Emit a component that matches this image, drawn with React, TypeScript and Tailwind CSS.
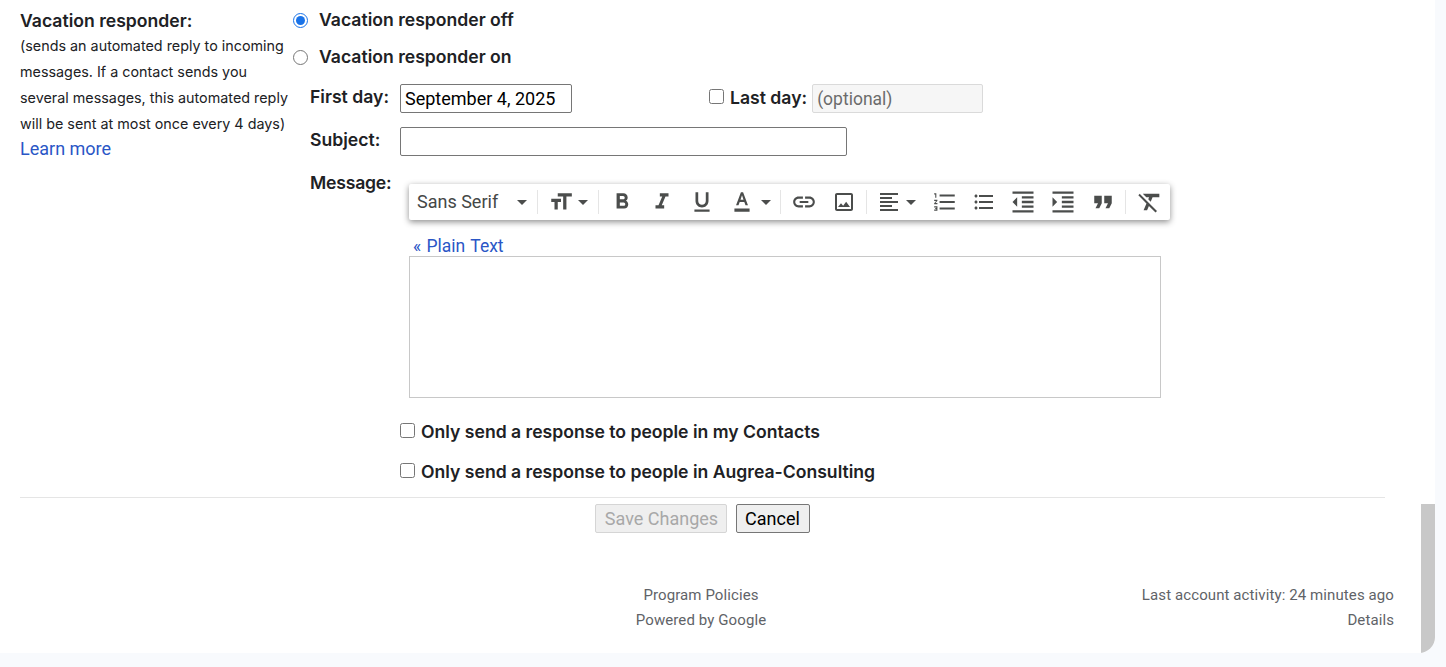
const P = {
  bold: "M15.6 10.79c.97-.67 1.65-1.77 1.65-2.79 0-2.26-1.75-4-4-4H7v14h7.04c2.09 0 3.71-1.7 3.71-3.79 0-1.52-.86-2.82-2.15-3.42zM10 6.5h3c.83 0 1.5.67 1.5 1.5s-.67 1.5-1.5 1.5h-3v-3zm3.5 9H10v-3h3.5c.83 0 1.5.67 1.5 1.5s-.67 1.5-1.5 1.5z",
  italic: "M10 4v3h2.21l-3.42 8H6v3h8v-3h-2.21l3.42-8H18V4z",
  underline: "M12 17c3.31 0 6-2.69 6-6V3h-2.5v8c0 1.93-1.57 3.5-3.5 3.5S8.5 12.93 8.5 11V3H6v8c0 3.31 2.69 6 6 6zm-7 2v2h14v-2H5z",
  color: "M11 3L6.5 15h2.25l1.12-3h4.25l1.12 3h2.25L13 3h-2zm-.38 7L12 5.67 13.38 10h-2.76zM5 18h14v3H5z",
  link: "M3.9 12c0-1.71 1.39-3.1 3.1-3.1h4V7H7c-2.76 0-5 2.24-5 5s2.24 5 5 5h4v-1.9H7c-1.71 0-3.1-1.39-3.1-3.1zM8 13h8v-2H8v2zm9-6h-4v1.9h4c1.71 0 3.1 1.39 3.1 3.1s-1.39 3.1-3.1 3.1h-4V17h4c2.76 0 5-2.24 5-5s-2.24-5-5-5z",
  image: "M19 5v14H5V5h14m0-2H5c-1.1 0-2 .9-2 2v14c0 1.1.9 2 2 2h14c1.1 0 2-.9 2-2V5c0-1.1-.9-2-2-2zm-4.86 8.86l-3 3.87L9 13.14 6 17h12l-3.86-5.14z",
  align: "M15 15H3v2h12v-2zm0-8H3v2h12V7zM3 13h18v-2H3v2zm0 8h18v-2H3v2zM3 3v2h18V3H3z",
  numbered: "M2 17h2v.5H3v1h1v.5H2v1h3v-4H2v1zm1-9h1V4H2v1h1v3zm-1 3h1.8L2 13.1v.9h3v-1H3.2L5 10.9V10H2v1zm5-6v2h14V5H7zm0 14h14v-2H7v2zm0-6h14v-2H7v2z",
  bullet: "M4 10.5c-.83 0-1.5.67-1.5 1.5s.67 1.5 1.5 1.5 1.5-.67 1.5-1.5-.67-1.5-1.5-1.5zm0-6c-.83 0-1.5.67-1.5 1.5S3.17 7.5 4 7.5 5.5 6.83 5.5 6 4.83 4.5 4 4.5zm0 12c-.83 0-1.5.68-1.5 1.5s.68 1.5 1.5 1.5 1.5-.68 1.5-1.5-.67-1.5-1.5-1.5zM7 19h14v-2H7v2zm0-6h14v-2H7v2zm0-8v2h14V5H7z",
  outdent: "M11 17h10v-2H11v2zm-8-5l4 4V8l-4 4zm0 9h18v-2H3v2zM3 3v2h18V3H3zm8 6h10V7H11v2zm0 4h10v-2H11v2z",
  indent: "M3 21h18v-2H3v2zM3 8v8l4-4-4-4zm8 9h10v-2H11v2zM3 3v2h18V3H3zm8 6h10V7H11v2zm0 4h10v-2H11v2z",
  quote: "M6 17h3l2-4V7H5v6h3zm8 0h3l2-4V7h-6v6h3z",
  clear: "M3.27 5L2 6.27l6.97 6.97L6.5 19h3l1.57-3.66L16.73 21 18 19.73 3.55 5.27 3.27 5zM6 5v.18L8.82 8h2.4l-.72 1.68 2.1 2.1L14.21 8H20V5H6z",
  size: "M9 4v3h5v12h3V7h5V4H9zm-6 8h3v7h3v-7h3V9H3v3z",
};

function Icon({ d, size = 24 }: { d: string; size?: number }) {
  return (
    <svg width={size} height={size} viewBox="0 0 24 24" className="fill-[#4b4d4c] shrink-0">
      <path d={d} />
    </svg>
  );
}

function Caret() {
  return (
    <svg width="10" height="5" viewBox="0 0 10 5" className="fill-[#4b4d4c] shrink-0">
      <path d="M0 0h10L5 5z" />
    </svg>
  );
}

function Sep() {
  return <div className="w-px h-6 bg-[#e5e5e5] shrink-0" />;
}

function Btn({ d, size = 24 }: { d: string; size?: number }) {
  return (
    <div className="w-10 h-6 flex items-center justify-center shrink-0">
      <Icon d={d} size={size} />
    </div>
  );
}

const label = "font-['Inter',sans-serif] text-[17.6px] font-semibold";

export default function App() {
  return (
    <div className="w-[1446px] h-[667px] overflow-hidden bg-[#f8fafd] font-['Roboto',sans-serif] text-[#202124]">
      <div className="w-[1435px] h-[653px] bg-white rounded-br-2xl overflow-hidden flex">
        <div className="w-[1421px] shrink-0 flex flex-col">
          <div className="flex">
            <div className="w-[273px] ml-5 shrink-0 pt-[9px]">
              <div className={`${label} leading-[24px]`}>Vacation responder:</div>
              <div className="font-['Inter',sans-serif] text-[14.35px] leading-[26px] text-[#202124] whitespace-nowrap">
                <div>(sends an automated reply to incoming</div>
                <div>messages. If a contact sends you</div>
                <div>several messages, this automated reply</div>
                <div>will be sent at most once every 4 days)</div>
              </div>
              <a className="block text-[18px] leading-[24px] text-[#2a56c6]">Learn more</a>
            </div>
            <div className="flex-1 pt-[8px]">
              <label className="flex items-center h-6">
                <input type="radio" name="vac" defaultChecked className="w-[15px] h-[15px] m-0 accent-[#1a73e8]" />
                <span className={`ml-[11px] ${label}`}>Vacation responder off</span>
              </label>
              <label className="flex items-center h-6 mt-[13px]">
                <input type="radio" name="vac" className="w-[15px] h-[15px] m-0 mt-[1px]" />
                <span className={`ml-[11px] ${label}`}>Vacation responder on</span>
              </label>
              <div className="flex items-center mt-[15px] ml-[17px] h-[29px]">
                <span className={`w-[90px] ${label} mt-[-2px]`}>First day:</span>
                <input readOnly value="September 4, 2025" className="w-[172px] h-[29px] border border-[#767676] rounded-[2px] px-1 text-[18px] text-black outline-none font-['Roboto',sans-serif]" />
                <input type="checkbox" className="w-[15px] h-[15px] m-0 ml-[137px] mt-[-4px]" />
                <span className={`ml-[6px] ${label}`}>Last day:</span>
                <input readOnly placeholder="(optional)" className="ml-[5px] w-[171px] h-[29px] border border-[#dadada] rounded-[2px] px-1 text-[17.5px] bg-[#f6f6f6] placeholder:text-[#6b6b6b] outline-none" />
              </div>
              <div className="flex items-center mt-[14px] ml-[17px] h-[29px]">
                <span className={`w-[90px] ${label} mt-[-2px]`}>Subject:</span>
                <input readOnly className="w-[447px] h-[29px] border border-[#767676] rounded-[2px] outline-none" />
              </div>
              <div className="flex mt-[15px] ml-[17px]">
                <span className={`w-[99px] ${label} leading-6 shrink-0 tracking-[-0.2px]`}>Message:</span>
                <div className="w-[761px] mt-[13px]">
                  <div className="w-[761px] h-9 bg-white flex items-center shadow-[0_2px_6px_rgba(0,0,0,0.45)] rounded-[2px] text-[18px] text-[#444746]">
                    <span className="ml-2 w-[98px] shrink-0 mt-[-2px]">Sans Serif</span>
                    <div className="ml-[2px]"><Caret /></div>
                    <div className="ml-[10px]"><Sep /></div>
                    <div className="ml-[10px]"><Icon d={P.size} size={26} /></div>
                    <div className="ml-[4px]"><Caret /></div>
                    <div className="ml-[10px] mr-[3px]"><Sep /></div>
                    <Btn d={P.bold} size={26} />
                    <Btn d={P.italic} size={26} />
                    <Btn d={P.underline} size={26} />
                    <Btn d={P.color} size={26} />
                    <div className="ml-[-1px]"><Caret /></div>
                    <div className="ml-[9px] mr-[3px]"><Sep /></div>
                    <Btn d={P.link} size={26} />
                    <Btn d={P.image} />
                    <div className="ml-[2px] mr-[2px]"><Sep /></div>
                    <Btn d={P.align} />
                    <div className="ml-[-3px]"><Caret /></div>
                    <div className="w-[9px] shrink-0" />
                    <Btn d={P.numbered} size={26} />
                    <div className="ml-[-1px]"><Btn d={P.bullet} /></div>
                    <div className="ml-[-1px]"><Btn d={P.outdent} size={28} /></div>
                    <Btn d={P.indent} size={28} />
                    <Btn d={P.quote} size={30} />
                    <div className="ml-[2px]"><Sep /></div>
                    <div className="ml-[4px]"><Btn d={P.clear} size={28} /></div>
                  </div>
                  <a className="block mt-[16px] ml-1 text-[17.5px] [word-spacing:1px] leading-5 text-[#2a56c6]">« Plain Text</a>
                  <div className="w-[752px] h-[142px] border border-[#c8c8c8]" />
                </div>
              </div>
              <label className="flex items-center h-6 mt-[22px] ml-[107px]">
                <input type="checkbox" className="w-[15px] h-[15px] m-0 mt-[-4px]" />
                <span className={`ml-[6px] ${label}`}>Only send a response to people in my Contacts</span>
              </label>
              <label className="flex items-center h-6 mt-[16px] ml-[107px]">
                <input type="checkbox" className="w-[15px] h-[15px] m-0 mt-[-4px]" />
                <span className={`ml-[6px] ${label}`}>Only send a response to people in Augrea-Consulting</span>
              </label>
            </div>
          </div>
          <div className="ml-5 w-[1365px] h-px bg-[#e5e5e5] mt-[13px]" />
          <div className="flex justify-center gap-[9px] mt-[6px] ml-[-17px]">
            <button className="w-[132px] h-[29px] border border-[#d5d5d5] rounded-[2px] bg-[#efefef] text-[18px] text-[#a8a8a8] pb-[2px] pl-[2px]">Save Changes</button>
            <button className="w-[74px] h-[29px] border border-[#767676] rounded-[2px] bg-[#efefef] text-[18px] text-black pb-[2px]">Cancel</button>
          </div>
          <div className="relative flex mt-[50px] text-[15px] leading-[25px] text-[#5f6368] tracking-[0.1px]">
            <div className="w-[1402px] text-center">
              <div>Program Policies</div>
              <div>Powered by Google</div>
            </div>
            <div className="absolute right-[27px] top-0 text-right">
              <div>Last account activity: 24 minutes ago</div>
              <div>Details</div>
            </div>
          </div>
        </div>
        <div className="w-[14px] flex flex-col justify-end">
          <div className="h-[149px] bg-[#c8c8c8]" />
        </div>
      </div>
    </div>
  );
}
